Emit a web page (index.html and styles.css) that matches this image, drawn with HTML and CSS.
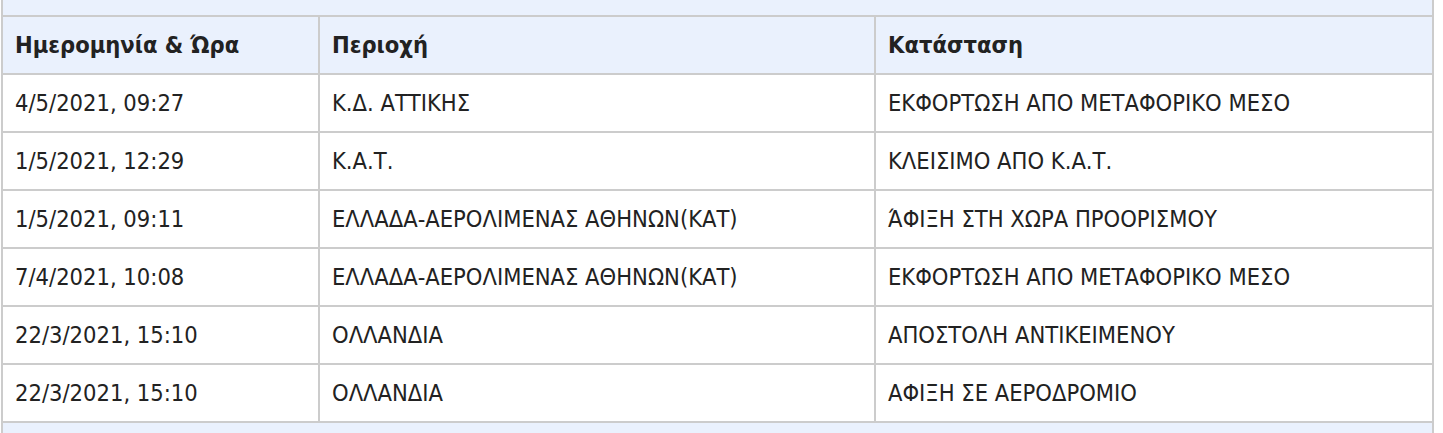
FILE: index.html
```html
<!DOCTYPE html>
<html lang="el">
<head>
<meta charset="utf-8">
<title>Ιστορικό αποστολής</title>
<link rel="stylesheet" href="styles.css">
</head>
<body>
<div class="panel">
  <table class="history">
    <thead>
      <tr>
        <th class="col-date">Ημερομηνία &amp; Ώρα</th>
        <th class="col-area">Περιοχή</th>
        <th class="col-status">Κατάσταση</th>
      </tr>
    </thead>
    <tbody>
      <tr><td>4/5/2021, 09:27</td><td>Κ.Δ. ΑΤΤΙΚΗΣ</td><td>ΕΚΦΟΡΤΩΣΗ ΑΠΟ ΜΕΤΑΦΟΡΙΚΟ ΜΕΣΟ</td></tr>
      <tr><td>1/5/2021, 12:29</td><td>Κ.Α.Τ.</td><td>ΚΛΕΙΣΙΜΟ ΑΠΟ Κ.Α.Τ.</td></tr>
      <tr><td>1/5/2021, 09:11</td><td>ΕΛΛΑΔΑ-ΑΕΡΟΛΙΜΕΝΑΣ ΑΘΗΝΩΝ(ΚΑΤ)</td><td>ΆΦΙΞΗ ΣΤΗ ΧΩΡΑ ΠΡΟΟΡΙΣΜΟΥ</td></tr>
      <tr><td>7/4/2021, 10:08</td><td>ΕΛΛΑΔΑ-ΑΕΡΟΛΙΜΕΝΑΣ ΑΘΗΝΩΝ(ΚΑΤ)</td><td>ΕΚΦΟΡΤΩΣΗ ΑΠΟ ΜΕΤΑΦΟΡΙΚΟ ΜΕΣΟ</td></tr>
      <tr><td>22/3/2021, 15:10</td><td>ΟΛΛΑΝΔΙΑ</td><td>ΑΠΟΣΤΟΛΗ ΑΝΤΙΚΕΙΜΕΝΟΥ</td></tr>
      <tr><td>22/3/2021, 15:10</td><td>ΟΛΛΑΝΔΙΑ</td><td>ΑΦΙΞΗ ΣΕ ΑΕΡΟΔΡΟΜΙΟ</td></tr>
    </tbody>
  </table>
</div>
</body>
</html>
```

FILE: styles.css
```css
html, body {
  margin: 0;
  padding: 0;
  background: #ffffff;
}

body {
  font-family: "DejaVu Sans Condensed", "DejaVu Sans", sans-serif;
  color: #222222;
}

.panel {
  margin: 0 9px 0 1px;
  padding: 15px 0 12px 0;
  background: #eaf1fd;
  border-left: 2px solid #cccccc;
  border-right: 2px solid #cccccc;
  min-height: 440px;
  box-sizing: border-box;
}

.history {
  width: 100%;
  border-collapse: collapse;
  table-layout: fixed;
  font-size: 23.5px;
}

.history th,
.history td {
  border: 2px solid #cccccc;
  height: 58px;
  padding: 0 12px;
  text-align: left;
  vertical-align: middle;
  white-space: nowrap;
  box-sizing: border-box;
}

.history th:first-child,
.history td:first-child {
  border-left: 0;
}

.history th:last-child,
.history td:last-child {
  border-right: 0;
}

.history th {
  background: #eaf1fd;
  font-weight: bold;
}

.history td {
  background: #ffffff;
  font-weight: normal;
}

.col-date { width: 316px; }
.col-area { width: 556px; }
.col-status { width: auto; }
```
